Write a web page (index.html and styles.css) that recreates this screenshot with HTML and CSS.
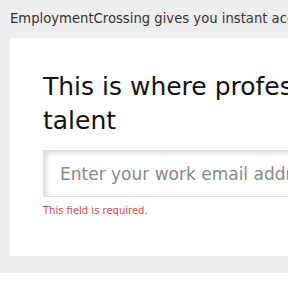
FILE: index.html
```html
<!DOCTYPE html>
<html lang="en">
<head>
    <meta charset="UTF-8">
    <meta name="viewport" content="width=device-width, initial-scale=1">
    <title>EmploymentCrossing</title>
    <link rel="stylesheet" href="styles.css">
</head>
<body>
    <div class="hero">
        <p class="intro">EmploymentCrossing gives you instant access to the best candidates in your industry.</p>

        <div class="card">
            <h1>This is where professionals find top talent</h1>

            <input type="email" class="email" placeholder="Enter your work email address">
            <div class="error">This field is required.</div>
        </div>
    </div>
</body>
</html>
```

FILE: styles.css
```css
html, body {
    margin: 0;
    padding: 0;
    background-color: #fff;
    overflow: hidden;
}

body {
    font-family: 'DejaVu Sans', sans-serif;
    color: #222;
}

.hero {
    width: 640px;
    background-color: #eee;
    padding: 10px 0 17px 10px;
}

.intro {
    margin: 0 0 11px 0;
    font-size: 13.2px;
    line-height: 17px;
    color: #333;
}

.card {
    background-color: #fff;
    padding: 32px 33px 38px 33px;
}

h1 {
    margin: 0;
    width: 520px;
    font-size: 25px;
    font-weight: normal;
    line-height: 34px;
    color: #111;
}

.email {
    display: block;
    width: 100%;
    height: 47px;
    margin: 12px 0 0 0;
    padding: 0 16px;
    box-sizing: border-box;
    border: 1px solid #ddd;
    box-shadow: inset 3px 3px 4px rgba(0, 0, 0, 0.12);
    font-family: inherit;
    font-size: 17px;
    outline: none;
}

.email::placeholder {
    color: #888;
}

.error {
    margin-top: 7px;
    font-size: 10px;
    line-height: 14px;
    color: #e0454f;
}
```
